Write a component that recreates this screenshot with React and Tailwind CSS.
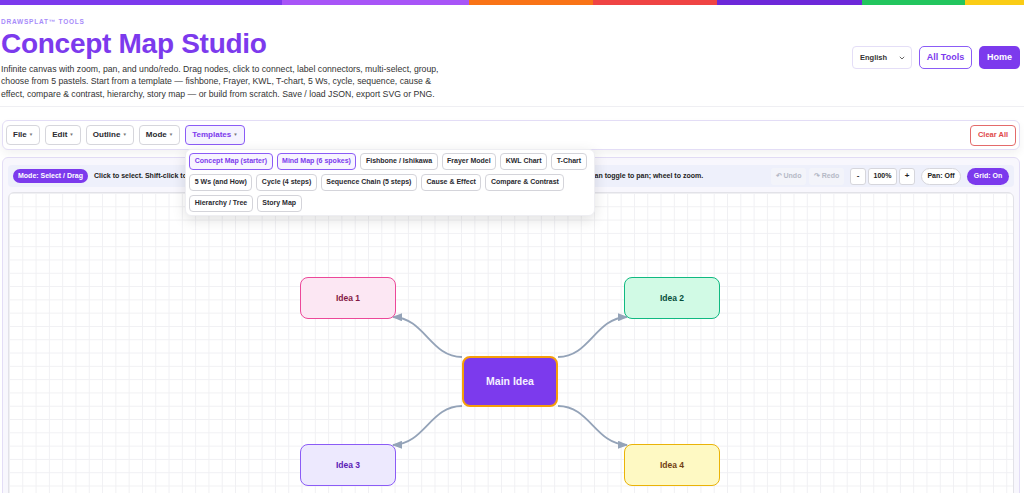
import React from "react";

const segs = [
  ["w-[282px]", "bg-[#7c3aed]"],
  ["w-[187px]", "bg-[#a855f7]"],
  ["w-[124px]", "bg-[#f97316]"],
  ["w-[124px]", "bg-[#ef4444]"],
  ["w-[145px]", "bg-[#6d28d9]"],
  ["w-[103px]", "bg-[#22c55e]"],
  ["flex-1", "bg-[#facc15]"],
];

function TB({ children, active }) {
  return (
    <button
      className={
        "h-[20px] px-[6px] rounded-[4px] border text-[8px] font-bold flex items-center gap-[2px] " +
        (active
          ? "border-[#8b5cf6] bg-[#f5f3ff] text-[#7c3aed]"
          : "border-[#d6d6dc] bg-white text-[#2a2a30]")
      }
    >
      {children}
      <span className="text-[4.5px] text-[#777]">▼</span>
    </button>
  );
}

function Chip({ children, active }) {
  return (
    <button
      className={
        "h-[17px] px-[4.5px] rounded-[4px] border text-[7px] font-bold whitespace-nowrap " +
        (active
          ? "border-[#8b5cf6] bg-[#f7f5ff] text-[#7c3aed]"
          : "border-[#d4d4da] bg-white text-[#2a2a30]")
      }
    >
      {children}
    </button>
  );
}

const X0 = 9;
const Y0 = 193;

function Node({ x, y, w, h, cls, text, big }) {
  return (
    <div
      className={
        "absolute flex items-center justify-center rounded-[8px] font-bold " +
        cls +
        (big ? " text-[10.5px]" : " text-[8.5px]")
      }
      style={{ left: x - X0, top: y - Y0, width: w, height: h }}
    >
      {text}
    </div>
  );
}

export default function App() {
  return (
    <div className="w-[1024px] h-[493px] overflow-hidden bg-white font-['Liberation_Sans',Arial,sans-serif] text-[#222]">
      <div className="flex h-[5px]">
        {segs.map(([w, c], i) => (
          <div key={i} className={w + " " + c} />
        ))}
      </div>

      <header className="flex items-center justify-between h-[102px] border-b border-[#efeff3]">
        <div className="self-start pt-[13px] pl-[1px]">
          <div className="text-[6.5px] font-bold tracking-[0.12em] text-[#a78bfa] leading-[8px]">
            DRAWSPLAT™ TOOLS
          </div>
          <h1 className="text-[28px] font-bold text-[#7c3aed] leading-[34px] tracking-[-0.01em] mt-[1px]">
            Concept Map Studio
          </h1>
          <p className="text-[8.7px] leading-[12.4px] text-[#333] w-[448px] mt-[2px]">
            Infinite canvas with zoom, pan, and undo/redo. Drag nodes, click to connect, label connectors, multi-select, group, choose from 5 pastels. Start from a template — fishbone, Frayer, KWL, T-chart, 5 Ws, cycle, sequence, cause &amp; effect, compare &amp; contrast, hierarchy, story map — or build from scratch. Save / load JSON, export SVG or PNG.
          </p>
        </div>
        <div className="flex items-center gap-[7px] pr-[4px] mt-[4px]">
          <div className="w-[60px] h-[23px] rounded-[4px] border border-[#e4def7] bg-white flex items-center justify-between pl-[7px] pr-[6px]">
            <span className="text-[7.5px] font-bold text-[#333]">English</span>
            <svg width="6" height="4" viewBox="0 0 6 4">
              <path d="M0.8 0.8 L3 3 L5.2 0.8" fill="none" stroke="#555" strokeWidth="0.9" />
            </svg>
          </div>
          <button className="w-[53px] h-[23px] rounded-[5px] border-[1.5px] border-[#8b5cf6] text-[#7c3aed] text-[9px] font-bold bg-white">
            All Tools
          </button>
          <button className="w-[41px] h-[23px] rounded-[5px] bg-[#7c3aed] text-white text-[9px] font-bold">
            Home
          </button>
        </div>
      </header>

      <div className="ml-[2px] mr-[4px] mt-[13px] h-[30px] rounded-[6px] border border-[#e3ddf6] bg-white shadow-[0_4px_8px_rgba(0,0,0,0.05)] flex items-center justify-between px-[3px] relative z-10">
        <div className="flex items-center gap-[5px]">
          <TB>File</TB>
          <TB>Edit</TB>
          <TB>Outline</TB>
          <TB>Mode</TB>
          <div className="relative">
            <TB active>Templates</TB>
            <div className="absolute left-0 top-[24px] w-[410px] bg-white rounded-[6px] shadow-[0_4px_14px_rgba(0,0,0,0.12)] border border-[#eeeef2] p-[3px] flex flex-wrap gap-[4px]">
              <Chip active>Concept Map (starter)</Chip>
              <Chip active>Mind Map (6 spokes)</Chip>
              <Chip>Fishbone / Ishikawa</Chip>
              <Chip>Frayer Model</Chip>
              <Chip>KWL Chart</Chip>
              <Chip>T-Chart</Chip>
              <Chip>5 Ws (and How)</Chip>
              <Chip>Cycle (4 steps)</Chip>
              <Chip>Sequence Chain (5 steps)</Chip>
              <Chip>Cause &amp; Effect</Chip>
              <Chip>Compare &amp; Contrast</Chip>
              <Chip>Hierarchy / Tree</Chip>
              <Chip>Story Map</Chip>
            </div>
          </div>
        </div>
        <button className="h-[21px] w-[46px] rounded-[4px] border border-[#e46a6a] text-[#e04848] text-[7.5px] font-bold bg-white mr-[0px]">
          Clear All
        </button>
      </div>

      <div className="ml-[2px] mr-[4px] mt-[7px] rounded-[6px] border border-[#e3ddf6] bg-[#f8f7fd] px-[5px] pt-[7px] h-[360px]">
        <div className="h-[22px] rounded-[4px] bg-[#eef0fb] flex items-center justify-between pl-[5px] pr-[5px]">
          <div className="flex items-center gap-[6px] min-w-0">
            <span className="h-[14px] px-[5px] rounded-full bg-[#7c3aed] text-white text-[7px] font-bold flex items-center whitespace-nowrap">
              Mode: Select / Drag
            </span>
            <span className="text-[7px] font-bold text-[#222] whitespace-nowrap">
              Click to select. Shift-click to multi-select. Drag to move; drag empty space to box-select. Double-click to edit text. Esc to deselect. Hold Space or use Pan toggle to pan; wheel to zoom.
            </span>
          </div>
          <div className="flex items-center gap-[3px]">
            <span className="h-[17px] w-[35px] rounded-[3px] bg-[#f3f4fa] text-[#b5b9c6] text-[7px] font-bold flex items-center justify-center">↶ Undo</span>
            <span className="h-[17px] w-[35px] rounded-[3px] bg-[#f3f4fa] text-[#b5b9c6] text-[7px] font-bold flex items-center justify-center">↷ Redo</span>
            <div className="flex items-center gap-[2px] ml-[3px]">
              <span className="h-[17px] w-[16px] rounded-[3px] border border-[#d6d6dc] bg-white text-[8px] font-bold flex items-center justify-center">-</span>
              <span className="h-[17px] w-[29px] rounded-[3px] border border-[#d6d6dc] bg-white text-[7px] font-bold flex items-center justify-center">100%</span>
              <span className="h-[17px] w-[16px] rounded-[3px] border border-[#d6d6dc] bg-white text-[8px] font-bold flex items-center justify-center">+</span>
            </div>
            <span className="ml-[3px] h-[17px] w-[40px] rounded-full border border-[#d6d6dc] bg-white text-[7px] font-bold flex items-center justify-center">Pan: Off</span>
            <span className="ml-[3px] h-[17px] w-[42px] rounded-full bg-[#7c3aed] text-white text-[7px] font-bold flex items-center justify-center">Grid: On</span>
          </div>
        </div>

        <div className="mt-[5px] relative h-[320px] rounded-[6px] border border-[#e2e2e8] bg-white bg-[linear-gradient(to_right,#f0f0f3_1px,transparent_1px),linear-gradient(to_bottom,#f0f0f3_1px,transparent_1px)] bg-[size:13.3px_13.3px] overflow-hidden">
          <svg className="absolute inset-0" width="1003" height="320">
            <defs>
              <marker id="ah" markerWidth="10" markerHeight="8" refX="9" refY="4" orient="auto" markerUnits="userSpaceOnUse">
                <path d="M0 0 L10 4 L0 8 Z" fill="#94a3b8" />
              </marker>
            </defs>
            <g transform={`translate(${-X0},${-Y0})`} fill="none" stroke="#94a3b8" strokeWidth="1.8">
              <path d="M462 357 C430 357, 425 318, 393 317" markerEnd="url(#ah)" />
              <path d="M558 357 C590 357, 595 318, 627 317" markerEnd="url(#ah)" />
              <path d="M462 406 C430 406, 425 444, 393 445" markerEnd="url(#ah)" />
              <path d="M558 406 C590 406, 595 444, 627 445" markerEnd="url(#ah)" />
            </g>
          </svg>
          <Node x={300} y={277} w={96} h={42} cls="bg-[#fce7f3] border-[1.5px] border-[#ec4899] text-[#831843]" text="Idea 1" />
          <Node x={624} y={277} w={96} h={42} cls="bg-[#d1fae5] border-[1.5px] border-[#10b981] text-[#064e3b]" text="Idea 2" />
          <Node x={462} y={356} w={96} h={51} cls="bg-[#7c3aed] border-2 border-[#f59e0b] text-[#f5f0ff]" text="Main Idea" big />
          <Node x={300} y={444} w={96} h={42} cls="bg-[#ede9fe] border-[1.5px] border-[#8b5cf6] text-[#5b21b6]" text="Idea 3" />
          <Node x={624} y={444} w={96} h={42} cls="bg-[#fef9c3] border-[1.5px] border-[#eab308] text-[#713f12]" text="Idea 4" />
        </div>
      </div>
    </div>
  );
}
